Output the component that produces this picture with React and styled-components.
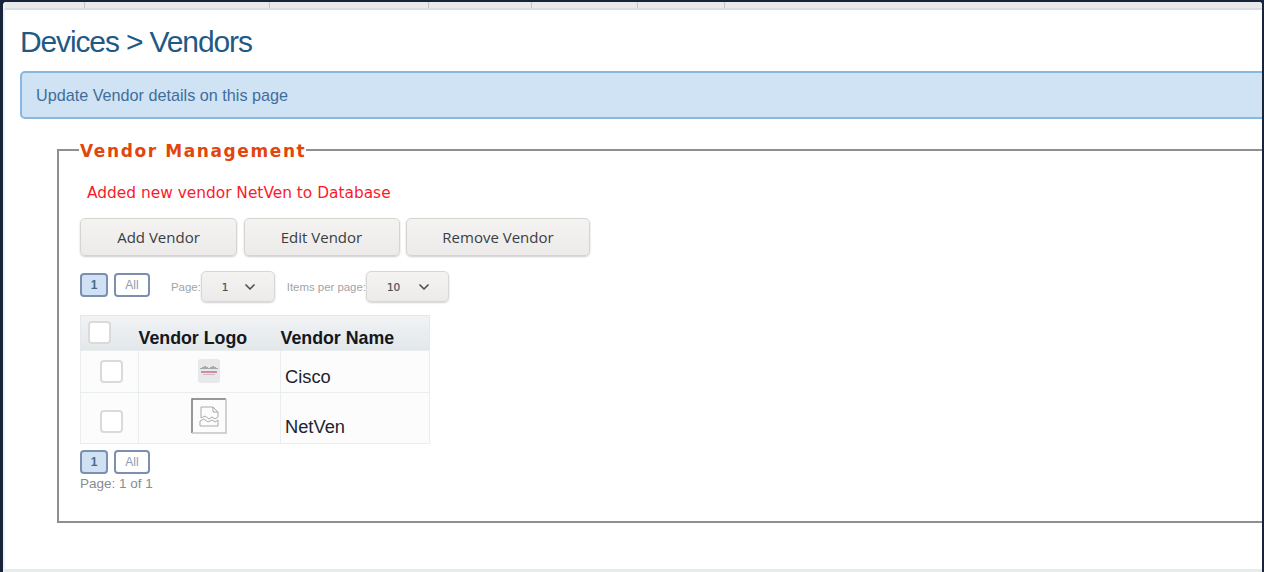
import React from 'react'
import styled, { createGlobalStyle } from 'styled-components'
import { ChevronDown } from 'lucide-react'

const Global = createGlobalStyle`
  html, body { margin: 0; padding: 0; height: 100%; background: #18243a; overflow: hidden; }
  #root { height: 100%; }
  * { box-sizing: border-box; }
`

const Frame = styled.div`
  height: 572px;
  padding: 2px 2px 0 3px;
  background: #18243a;
`

const Page = styled.div`
  height: 570px;
  display: flex;
  flex-direction: column;
  background: #fff;
  overflow: hidden;
  border-radius: 3px 3px 0 0;
  border-left: 2px solid #eef2f2;
`

const NavStrip = styled.div`
  height: 8px;
  flex: none;
  display: flex;
  background: #eaeaec;
  border-bottom: 2px solid #d9dfe0;
`

const NavTab = styled.div`
  width: ${p => p.$w}px;
  flex: none;
  border-right: 1px solid #c4c6c8;
`

const Content = styled.div`
  flex: 1;
  min-height: 0;
  padding: 0 0 0 15px;
  border-bottom: 3px solid #e6ecea;
`

const Title = styled.h1`
  margin: 13px 0 0;
  height: 38px;
  font: 400 30px/38px 'Liberation Sans', Arial, sans-serif;
  letter-spacing: -1.13px;
  color: #1f5a85;
`

const Notice = styled.div`
  width: 1300px;
  height: 48px;
  margin-top: 10px;
  padding-left: 14px;
  display: flex;
  align-items: center;
  font: 400 16.2px 'Liberation Sans', Arial, sans-serif;
  color: #3f6d9c;
  background: #d0e3f4;
  border: 2px solid #89b7e2;
  border-radius: 5px;
`

const Group = styled.fieldset`
  width: 1300px;
  height: 384px;
  margin: 20px 0 0 37px;
  padding: 0 0 0 21px;
  border: 2px solid #8f8f8f;
  border-radius: 0;
`

const GroupTitle = styled.legend`
  padding: 2px 0 0 1px;
  margin-left: -1px;
  font: 700 17px/20px 'DejaVu Sans', sans-serif;
  letter-spacing: 1.6px;
  color: #e2450e;
`

const Message = styled.div`
  margin: 22px 0 0 7px;
  height: 20px;
  font: 400 15.4px/20px 'DejaVu Sans', sans-serif;
  color: #fb1a2c;
`

const Actions = styled.div`
  display: flex;
  gap: 6.5px;
  margin-top: 15px;
`

const ActionButton = styled.button`
  width: ${p => p.$w}px;
  height: 38px;
  padding: 0;
  font: 400 15px 'Open Sans', sans-serif;
  color: #3a3d42;
  background: linear-gradient(#f4f3f2, #ecebea);
  border: 1px solid #d6d4d1;
  border-radius: 5px;
  box-shadow: 0 1px 2px rgba(0, 0, 0, 0.2);
`

const Pager = styled.div`
  display: flex;
  align-items: flex-start;
  margin-top: ${p => p.$top}px;
`

const PageLink = styled.div`
  width: ${p => p.$w}px;
  height: 24px;
  margin: 2px 6px 0 0;
  display: flex;
  align-items: center;
  justify-content: center;
  font: ${p => (p.$active ? 700 : 400)} 12px 'Liberation Sans', Arial, sans-serif;
  color: ${p => (p.$active ? '#4a6a8c' : '#8d9bb0')};
  background: ${p => (p.$active ? '#cfe1f3' : '#fff')};
  border: 2px solid #7d8fb0;
  border-radius: 4px;
`

const PagerLabel = styled.span`
  align-self: center;
  margin-left: ${p => p.$left}px;
  font: 400 11.4px 'Liberation Sans', Arial, sans-serif;
  color: #a0a4a8;
  white-space: nowrap;
`

const SelectBox = styled.div`
  width: ${p => p.$w}px;
  height: 31px;
  padding: 0 16px 0 20px;
  display: flex;
  align-items: center;
  justify-content: space-between;
  font: 400 10.5px 'DejaVu Sans', sans-serif;
  -webkit-text-stroke: 0.2px #4a4e55;
  color: #4a4e55;
  background: linear-gradient(#f4f3f2, #ecebea);
  border: 1px solid #d9d7d4;
  border-radius: 5px;
  box-shadow: 0 1px 2px rgba(0, 0, 0, 0.18);
`

const Table = styled.table`
  width: 349px;
  margin: 13px 0 0;
  border-collapse: collapse;
  table-layout: fixed;
  border: 1px solid #e4e8ea;
`

const HeadRow = styled.tr`
  height: 35px;
  background: linear-gradient(#f1f3f5, #e2e7ea);
`

const HeadCell = styled.th`
  padding: ${p => p.$top}px 0 0;
  text-align: left;
  vertical-align: top;
  font: 700 17.8px/22px 'Liberation Sans', Arial, sans-serif;
  color: #14171c;
`

const Row = styled.tr`
  height: ${p => p.$h}px;
  background: #fcfcfc;
`

const Cell = styled.td`
  padding: 0 0 0 ${p => p.$pad || 0}px;
  vertical-align: ${p => p.$valign || 'middle'};
  border: 1px solid #e9edee;
  font: 400 18.3px/22px 'Liberation Sans', Arial, sans-serif;
  color: #1d2430;
`

const NameText = styled.div`
  padding-bottom: ${p => p.$bottom}px;
`

const Check = styled.div`
  width: 23px;
  height: 23px;
  margin: ${p => p.$margin};
  background: #fff;
  border: 2px solid #dcdad6;
  border-radius: 4px;
`

const LogoWrap = styled.div`
  display: flex;
  justify-content: center;
  margin: ${p => p.$margin || 0};
`

const PageCount = styled.div`
  margin-top: 3px;
  font: 400 13.5px/14px 'Liberation Sans', Arial, sans-serif;
  color: #888c90;
`

const CiscoLogo = () => (
  <svg width="22" height="24" viewBox="0 0 22 24">
    <rect width="22" height="24" rx="3" fill="#e6e8e9" />
    <g stroke="#5f6870" strokeWidth="1">
      <path d="M3 10V9M5 10V8M7 10V7M9 10V8M11 10V9M13 10V8M15 10V7M17 10V8M19 10V9" />
    </g>
    <rect x="3" y="12" width="16" height="2" fill="#d78a98" />
    <rect x="5" y="15" width="12" height="1" fill="#c9bcc2" />
  </svg>
)

const BrokenImage = () => (
  <svg width="36" height="36" viewBox="0 0 36 36">
    <path d="M1 35V1h34" fill="none" stroke="#777" strokeWidth="1.500" />
    <path d="M35 1v34H1" fill="none" stroke="#c4c4c4" strokeWidth="1.500" />
    <g fill="none" stroke="#aaa" strokeWidth="1">
      <path d="M10 18V9h12l5 5v5l-3 2-3-2-3 2-4-3-4 2z" />
      <path d="M22 9v5h5" />
      <path d="M9 28v-5l4-2 4 3 4-2 3 2 3-2v6z" />
    </g>
  </svg>
)

const tabs = [80, 185, 159, 103, 106, 87]

const App = () => {
  return (
    <Frame>
      <Global />
      <Page>
        <NavStrip>
          {tabs.map((w, i) => <NavTab key={i} $w={w} />)}
        </NavStrip>
        <Content>
          <Title>Devices &gt; Vendors</Title>
          <Notice>Update Vendor details on this page</Notice>
          <Group>
            <GroupTitle>Vendor Management</GroupTitle>
            <Message>Added new vendor NetVen to Database</Message>
            <Actions>
              <ActionButton $w={157}>Add Vendor</ActionButton>
              <ActionButton $w={156}>Edit Vendor</ActionButton>
              <ActionButton $w={184}>Remove Vendor</ActionButton>
            </Actions>
            <Pager $top={15}>
              <PageLink $w={28} $active>1</PageLink>
              <PageLink $w={36}>All</PageLink>
              <PagerLabel $left={15}>Page:</PagerLabel>
              <SelectBox $w={74}>1 <ChevronDown size={16} strokeWidth={2.5} /></SelectBox>
              <PagerLabel $left={12}>Items per page:</PagerLabel>
              <SelectBox $w={83}>10 <ChevronDown size={16} strokeWidth={2.5} /></SelectBox>
            </Pager>
            <Table>
              <colgroup>
                <col width="58" />
                <col width="142" />
                <col width="149" />
              </colgroup>
              <thead>
                <HeadRow>
                  <HeadCell $top={5}><Check $margin="0 0 0 7px" /></HeadCell>
                  <HeadCell $top={11}>Vendor Logo</HeadCell>
                  <HeadCell $top={11}>Vendor Name</HeadCell>
                </HeadRow>
              </thead>
              <tbody>
                <Row $h={42}>
                  <Cell><Check $margin="0 0 0 19px" /></Cell>
                  <Cell><LogoWrap $margin="-1px 0 0 -1px"><CiscoLogo /></LogoWrap></Cell>
                  <Cell $pad={4} $valign="bottom"><NameText $bottom={4}>Cisco</NameText></Cell>
                </Row>
                <Row $h={51}>
                  <Cell><Check $margin="7px 0 0 19px" /></Cell>
                  <Cell><LogoWrap $margin="-4px 0 0 -2px"><BrokenImage /></LogoWrap></Cell>
                  <Cell $pad={4} $valign="bottom"><NameText $bottom={5}>NetVen</NameText></Cell>
                </Row>
              </tbody>
            </Table>
            <Pager $top={4}>
              <PageLink $w={28} $active>1</PageLink>
              <PageLink $w={36}>All</PageLink>
            </Pager>
            <PageCount>Page: 1 of 1</PageCount>
          </Group>
        </Content>
      </Page>
    </Frame>
  )
}

export default App
